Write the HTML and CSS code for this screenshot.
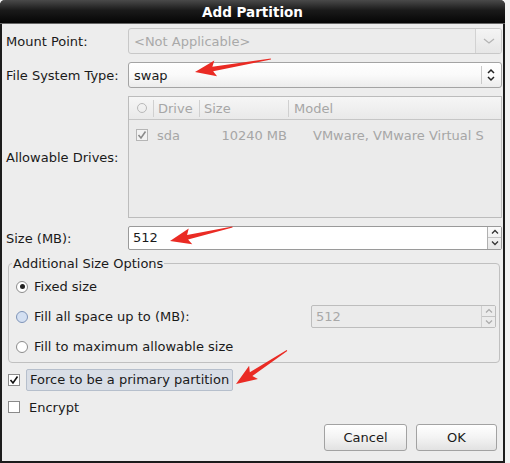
FILE: index.html
```html
<html>
	<head>
		<meta name="viewport" content="width=device-width, initial-scale=1">
		<meta charset=utf-8>
		<link rel="stylesheet" href="styles.css">
		<title>Add Partition</title>
	</head>
	<body>
		<div class="dialog">
			<div class="titlebar">Add Partition</div>
			<div class="content">
				<div class="form">
					<div class="lbl">Mount Point:</div>
					<div class="combo off">
						<span class="val">&lt;Not Applicable&gt;</span>
						<span class="drop">
							<svg width="12" height="8" viewBox="0 0 12 8"><polyline points="1,2 6,6 11,2" fill="none" stroke="#b4b4b4" stroke-width="1.3"/></svg>
						</span>
					</div>

					<div class="lbl">File System Type:</div>
					<div class="combo">
						<span class="val">swap</span>
						<span class="drop">
							<svg width="10" height="14" viewBox="0 0 10 14"><polyline points="2,5 5,2 8,5" fill="none" stroke="#222" stroke-width="1.5"/><polyline points="2,9 5,12 8,9" fill="none" stroke="#222" stroke-width="1.5"/></svg>
						</span>
					</div>

					<div class="lbl">Allowable Drives:</div>
					<div class="drives">
						<div class="dhead">
							<div class="c0"><span class="ring"></span></div>
							<div class="c1">Drive</div>
							<div class="c2">Size</div>
							<div class="c3">Model</div>
						</div>
						<div class="drow">
							<div class="c0"><span class="tick dim"><svg width="10" height="10" viewBox="0 0 10 10"><polyline points="1.5,5 4,8 8.5,1.5" fill="none" stroke="#8a8a8a" stroke-width="1.6"/></svg></span></div>
							<div class="c1">sda</div>
							<div class="c2 num">10240 MB</div>
							<div class="c3 model">VMware, VMware Virtual S</div>
						</div>
					</div>

					<div class="lbl">Size (MB):</div>
					<div class="spin">
						<span class="val">512</span>
						<span class="steps">
							<span><svg width="8" height="6" viewBox="0 0 8 6"><polyline points="1,4.5 4,1.5 7,4.5" fill="none" stroke="#333" stroke-width="1.3"/></svg></span>
							<span><svg width="8" height="6" viewBox="0 0 8 6"><polyline points="1,1.5 4,4.5 7,1.5" fill="none" stroke="#333" stroke-width="1.3"/></svg></span>
						</span>
					</div>
				</div>

				<fieldset class="opts">
					<legend>Additional Size Options</legend>
					<div class="opt r1"><span class="radio on"></span>Fixed size</div>
					<div class="opt r2"><span class="radio hov"></span>Fill all space up to (MB):
						<div class="spin small off">
							<span class="val">512</span>
							<span class="steps">
								<span><svg width="8" height="6" viewBox="0 0 8 6"><polyline points="1,4.5 4,1.5 7,4.5" fill="none" stroke="#aaa" stroke-width="1.2"/></svg></span>
								<span><svg width="8" height="6" viewBox="0 0 8 6"><polyline points="1,1.5 4,4.5 7,1.5" fill="none" stroke="#aaa" stroke-width="1.2"/></svg></span>
							</span>
						</div>
					</div>
					<div class="opt r3"><span class="radio"></span>Fill to maximum allowable size</div>
				</fieldset>

				<div class="check first">
					<span class="tick"><svg width="10" height="10" viewBox="0 0 10 10"><polyline points="1.5,5 4,8 8.5,1.5" fill="none" stroke="#111" stroke-width="1.6"/></svg></span>
					<span class="focus">Force to be a primary partition</span>
				</div>
				<div class="check">
					<span class="tick"></span>
					<span class="plain">Encrypt</span>
				</div>

				<div class="buttons">
					<button class="btn cancel">Cancel</button>
					<button class="btn ok">OK</button>
				</div>
			</div>

			<!-- red pointers drawn on top of the screenshot -->
			<svg class="marks" width="510" height="463" viewBox="0 0 510 463">
				<g fill="#ea2b24">
					<polygon transform="translate(195 72) rotate(-9.8)" points="0,0 21,-8 18,-2.2 77,-0.4 77,0.6 18,2.4 21,8"/>
					<polygon transform="translate(170 241) rotate(-12.7)" points="0,0 21,-8 18,-2.2 64,-0.4 64,0.6 18,2.4 21,8"/>
					<polygon transform="translate(236 384) rotate(-33.4)" points="0,0 21,-8 18,-2.2 61,-0.4 61,0.6 18,2.4 21,8"/>
				</g>
			</svg>
		</div>
	</body>
</html>
```

FILE: styles.css
```css
body{
	margin:0px;
	background:#f2f2f2;
	font-family:"DejaVu Sans", sans-serif;
	font-size:13px;
	color:#1a1a1a;
}
.dialog{
	position:relative;
	box-sizing:border-box;
	width:505px;
	height:463px;
	background:#ededed;
	border:2px solid #1c1c1c;
	border-top:0px;
	border-radius:5px 5px 0 0;
}
.titlebar{
	height:24px;
	line-height:24px;
	margin:0 -2px;
	text-align:center;
	font-weight:bold;
	font-size:13.5px;
	color:#fff;
	background:linear-gradient(#4a4a4a, #1a1a1a 45%, #050505);
	border-radius:5px 5px 0 0;
	border-bottom:1px solid #666;
	box-sizing:border-box;
}
.content{
	padding:4px 1px 0 4px;
}
.form{
	display:grid;
	grid-template-columns:122px 1fr;
	grid-template-rows:26px 26px 122px 24px;
	row-gap:8px;
	align-items:center;
}
.form .spin{
	margin-top:-1px;
}
.lbl{
	white-space:nowrap;
}

/* combo boxes */
.combo{
	box-sizing:border-box;
	height:26px;
	display:flex;
	align-items:center;
	border:1px solid #a4a4a4;
	border-radius:3px;
	background:linear-gradient(#fff, #fafafa 50%, #ececec);
}
.combo .val{
	flex:1;
	padding-left:5px;
}
.combo .drop{
	width:18px;
	height:18px;
	margin-right:1px;
	border-left:1px solid #c9c9c9;
	display:flex;
	align-items:center;
	justify-content:center;
}
.combo.off{
	background:#ececec;
	border-color:#c8c8c8;
	color:#a9a9a9;
}
.combo.off .drop{
	width:25px;
	height:24px;
	border-left-color:#d2d2d2;
	background:linear-gradient(#f4f4f4, #e6e6e6);
	border-radius:0 2px 2px 0;
	margin-right:0px;
}

/* drive list */
.drives{
	box-sizing:border-box;
	height:122px;
	border:1px solid #bcbcbc;
	background:#ebebeb;
	color:#a6a6a6;
}
.dhead, .drow{
	display:flex;
	align-items:center;
}
.dhead{
	height:22px;
	background:linear-gradient(#f6f6f6, #e9e9e9);
	border-bottom:1px solid #c6c6c6;
}
.drow{
	height:30px;
}
.c0{
	width:23px;
	display:flex;
	justify-content:center;
	padding-left:1px;
}
.c1{
	width:41px;
	padding-left:4px;
}
.c2{
	width:84px;
	padding-left:4px;
}
.c3{
	flex:1;
	padding-left:5px;
	white-space:nowrap;
	overflow:hidden;
}
.dhead .c1, .dhead .c2, .dhead .c3{
	border-left:1px solid #d0d0d0;
	line-height:17px;
}
.drow .num{
	text-align:right;
	padding-right:3px;
	width:85px;
}
.drow .model{
	padding-left:23px;
}
.ring{
	box-sizing:border-box;
	width:10px;
	height:10px;
	border:1px solid #b8b8b8;
	border-radius:50%;
}

/* spin buttons */
.spin{
	box-sizing:border-box;
	height:24px;
	display:flex;
	align-items:stretch;
	border:1px solid #9a9a9a;
	border-radius:2px;
	background:#fff;
}
.spin .val{
	flex:1;
	padding-left:4px;
	line-height:22px;
}
.spin .steps{
	width:13px;
	display:flex;
	flex-direction:column;
	border-left:1px solid #b0b0b0;
	background:linear-gradient(#fbfbfb, #e6e6e6);
}
.spin .steps span{
	flex:1;
	display:flex;
	align-items:center;
	justify-content:center;
}
.spin .steps span + span{
	border-top:1px solid #c4c4c4;
}
.spin.small{
	width:185px;
	height:23px;
	margin-left:auto;
	margin-right:3px;
}
.spin.off{
	background:#ebebeb;
	border-color:#bdbdbd;
	color:#a8a8a8;
}
.spin.off .steps{
	border-left-color:#cfcfcf;
	background:#ececec;
}

/* size options */
.opts{
	margin:6px 2px 0 2px;
	padding:0px;
	border:1px solid #c0c0c0;
	border-radius:4px;
}
.opts legend{
	padding:0 1px;
	margin-left:3px;
}
.opt{
	display:flex;
	align-items:center;
	padding-left:7px;
}
.r1{
	height:31px;
}
.r2{
	height:29px;
}
.r3{
	height:31px;
}
.radio{
	box-sizing:border-box;
	width:12px;
	height:12px;
	border:1px solid #8c8c8c;
	border-radius:50%;
	background:#fff;
	margin-right:6px;
	display:flex;
	align-items:center;
	justify-content:center;
}
.radio.on::after{
	content:"";
	width:5px;
	height:5px;
	border-radius:50%;
	background:#222;
}
.radio.hov{
	background:#d4e0f2;
	border-color:#7f94b8;
}

/* check boxes */
.check{
	display:flex;
	align-items:center;
	height:22px;
	padding-left:2px;
	margin-top:5px;
}
.check.first{
	margin-top:6px;
}
.tick{
	box-sizing:border-box;
	width:12px;
	height:12px;
	border:1px solid #8a8a8a;
	background:#fff;
	display:flex;
	align-items:center;
	justify-content:center;
	margin-right:6px;
}
.tick.dim{
	border-color:#b5b5b5;
	background:#f2f2f2;
	margin-right:0px;
}
.focus{
	box-sizing:border-box;
	height:22px;
	line-height:20px;
	padding:0 3px;
	background:#d9dee6;
	border:1px solid #b6bfcc;
	border-radius:2px;
}
.plain{
	padding-left:3px;
}

/* dialog buttons */
.buttons{
	display:flex;
	justify-content:flex-end;
	gap:9px;
	margin-top:6px;
	padding-right:5px;
}
.btn{
	box-sizing:border-box;
	height:27px;
	font-family:"DejaVu Sans", sans-serif;
	font-size:13px;
	color:#1a1a1a;
	border:1px solid #a2a2a2;
	border-radius:3px;
	background:linear-gradient(#ffffff, #f3f3f3 50%, #e2e2e2);
}
.cancel{
	width:83px;
}
.ok{
	width:81px;
}

.marks{
	position:absolute;
	left:-2px;
	top:0px;
	pointer-events:none;
}
```
